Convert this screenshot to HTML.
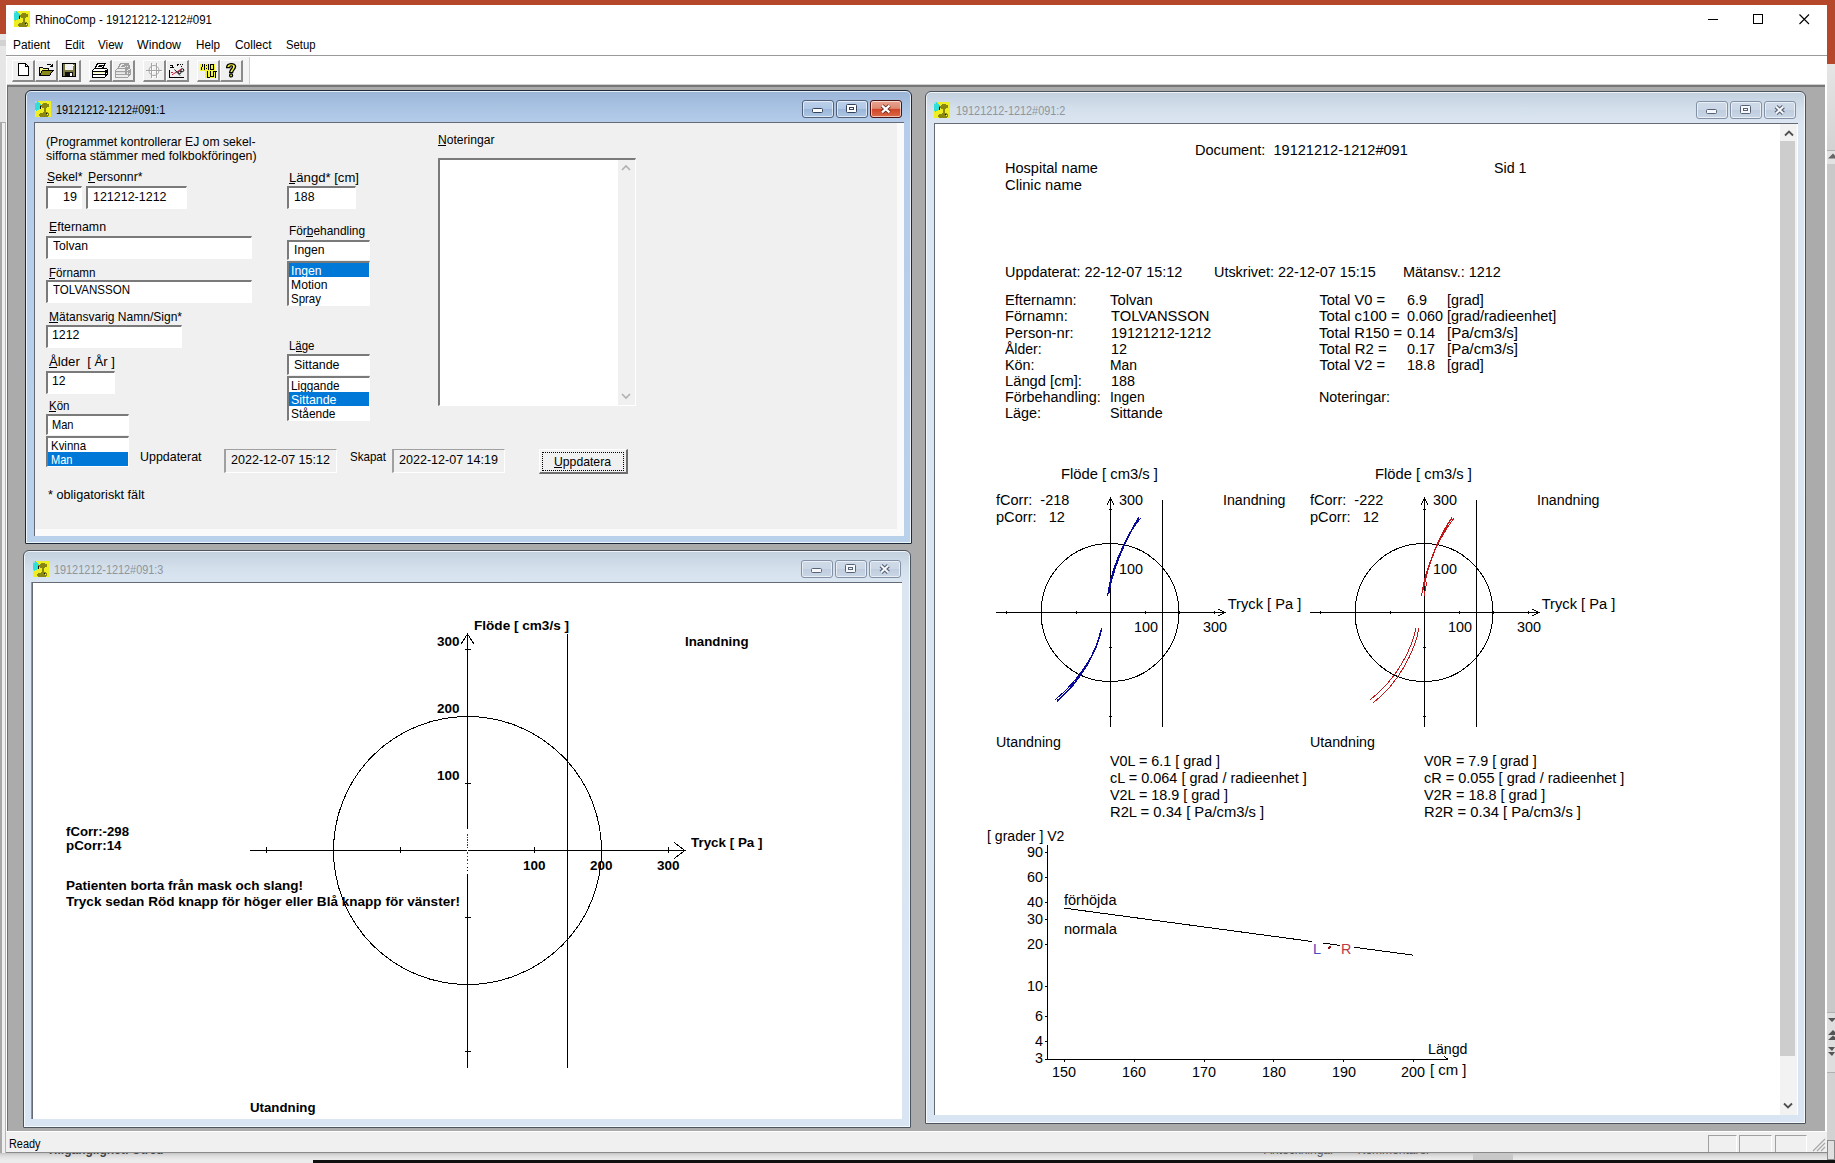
<!DOCTYPE html>
<html>
<head>
<meta charset="utf-8">
<title>RhinoComp</title>
<style>
*{box-sizing:border-box;margin:0;padding:0}
html,body{width:1835px;height:1163px;overflow:hidden}
body{position:relative;background:#e9e9e9;font-family:"Liberation Sans",sans-serif;font-size:12px;color:#000}
.abs{position:absolute}
.t{position:absolute;white-space:pre;line-height:1;transform-origin:0 0}
svg{position:absolute;overflow:visible}
/* background (other app behind) */
#bgtop{left:0;top:0;width:1835px;height:34px;background:#b5472b}
#bgleft{left:0;top:34px;width:6px;height:1129px;background:#e6e6e6}
#bgright{left:1827px;top:164px;width:8px;height:999px;background:#c9c9c9}
#bgbottom{left:0;top:1153px;width:1827px;height:10px;background:linear-gradient(#c4c4c4 0,#d8d8d8 2px,#e2e2e2 4px,#ececec 7px)}
#taskbar{left:313px;top:1160px;width:1522px;height:3px;background:#101010}
/* main window */
#main{left:6px;top:5px;width:1821px;height:1148px;background:#fff}
#mdi{left:7px;top:85px;width:1818px;height:1046px;background:#ababab;border-top:2px solid #777;border-left:1px solid #6e6e6e;box-shadow:0 -1px 0 #cfcfcf}
#status{left:6px;top:1131px;width:1821px;height:22px;background:#f0f0f0;border-top:1px solid #fff;border-bottom:1px solid #8a8a8a}
/* MDI children */
.win{position:absolute;border:1px solid #1d2a3a;border-radius:6px 6px 1px 1px;box-shadow:inset 0 0 0 1px rgba(255,255,255,.75)}
.win.active{background:linear-gradient(#9cb5d6 0,#a7c1e2 14px,#b5cdea 32px,#b9d1ea 100%)}
.win.inactive{background:linear-gradient(#c2cfdd 0,#d3dfeb 16px,#dbe6f2 32px,#d9e5f2 100%);border-color:#4b5560}
.win .client{position:absolute;border-left:1px solid #646b74;border-top:1px solid #646b74;overflow:hidden;background:#fff}
.win .cap{position:absolute;font-size:12px;white-space:pre;line-height:14px;transform-origin:0 0;transform:scaleX(.905)}
.inactive .cap{color:#90959c}
.cb{position:absolute;width:32px;height:18px;border:1px solid #53607a;border-radius:3px;box-shadow:inset 0 0 0 1px rgba(255,255,255,.6)}
.active .cb{background:linear-gradient(#bcd0ea 0,#b0c8e6 48%,#9ab6d9 52%,#adc6e4 100%)}
.active .cb.x{background:linear-gradient(#e8a491 0,#df8a72 46%,#cf4526 52%,#dc6a48 100%);border-color:#4a1414}
.inactive .cb{background:linear-gradient(#cfdae8 0,#cbd7e6 48%,#bfcddf 52%,#c9d6e5 100%);border-color:#8391a6}
.frm{font-size:12px}
</style>
</head>
<body>
<div class="abs" id="bgtop"></div>
<div class="abs" id="bgleft"></div>
<div class="abs" style="left:0;top:40px;width:6px;height:6px;background:#d2d2d2"></div>
<div class="abs" style="left:0;top:122px;width:6px;height:1041px;background:#efefef;border-left:2px solid #a8a8a8;border-right:1px solid #b4b4b4;border-top:1px solid #a8a8a8"></div>
<div class="abs" id="bgright"></div>
<div class="abs" style="left:1827px;top:0;width:8px;height:64px;background:#b5472b"></div>
<div class="abs" style="left:1827px;top:64px;width:8px;height:86px;background:linear-gradient(#e6e6e6,#d2d2d2)"></div>
<div class="abs" style="left:1827px;top:150px;width:8px;height:14px;background:#e2e2e2;border-top:1px solid #b0b0b0"></div>
<svg style="left:1828px;top:153px" width="7" height="6" viewBox="0 0 7 6"><path d="M0,5.5L5,0.5L7,2.5V5.5z" fill="#666"/></svg>
<div class="abs" style="left:1827px;top:1012px;width:8px;height:61px;background:#dedede;border-top:1px solid #b0b0b0;border-bottom:1px solid #b0b0b0"></div>
<svg style="left:1828px;top:1016px" width="7" height="46" viewBox="0 0 7 46"><path d="M0,2h7v1L4,6z M0,19L5,14L7,16v3z M0,24L5,19.5L7,21v3z M0,31h7L4,35z M0,36h7L4,40z" fill="#555"/></svg>
<div class="abs" style="left:1827px;top:1073px;width:8px;height:67px;background:#d2d2d2"></div>
<div class="abs" style="left:1827px;top:1140px;width:8px;height:20px;background:#e0e0e0;border:1px solid #8a8a8a"></div>
<div class="abs" id="bgbottom"></div>
<div class="abs" id="taskbar"></div>
<div class="abs" style="left:30px;top:1153px;width:160px;height:4px;overflow:hidden"><div class="t" style="left:0;top:-9px;font-size:12px;color:#444;font-weight:bold">^   Tillgänglighet: Utred</div></div>
<div class="abs" style="left:1264px;top:1153px;width:200px;height:4px;overflow:hidden"><div class="t" style="left:0;top:-9px;font-size:12px;color:#555">Anteckningar       Kommentarer</div></div>
<div class="abs" style="left:1473px;top:1153px;width:40px;height:7px;background:#c8c8c8"></div>

<div class="abs" id="main"></div>
<svg style="left:14px;top:11px" width="16" height="16" viewBox="0 0 16 16" shape-rendering="crispEdges">
<rect x="0" y="0" width="16" height="16" fill="#eeee22"/>
<polygon points="0,1 3,0 6,4 5,8 1,10 0,9" fill="#30e0d8"/>
<rect x="0" y="0" width="2" height="2" fill="#9fd8e8"/>
<path d="M7,2h5v1h2v3h-2v1h-1v4h2v1h1v3h-1v1h-8v-1h-1v-2h1v-1h3v-1h1v-4h-2v-1h-2v-2h2v-1h1z" fill="#8a8710"/>
<rect x="5" y="5" width="1" height="3" fill="#111"/>
<rect x="11" y="12" width="1" height="1" fill="#111"/>
<rect x="12" y="13" width="1" height="1" fill="#f4f4a0"/>
</svg>
<div class="t" style="left:35.00px;top:14px;font-size:12.5px;transform:scaleX(0.9194);">RhinoComp - 19121212-1212#091</div>
<svg style="left:1700px;top:8px" width="120" height="24" viewBox="0 0 120 24">
<path d="M8,11.5h10" stroke="#000" stroke-width="1" fill="none"/>
<rect x="53.5" y="6.5" width="9" height="9" stroke="#000" stroke-width="1" fill="none"/>
<path d="M99.5,6.5l9.5,9.5M109,6.5l-9.5,9.5" stroke="#000" stroke-width="1.1" fill="none"/>
</svg>

<div class="t" style="left:13.00px;top:39px;font-size:12.5px;transform:scaleX(0.9507);">Patient</div>
<div class="t" style="left:64.50px;top:39px;font-size:12.5px;transform:scaleX(0.8960);">Edit</div>
<div class="t" style="left:98.00px;top:39px;font-size:12.5px;transform:scaleX(0.9304);">View</div>
<div class="t" style="left:137.00px;top:39px;font-size:12.5px;transform:scaleX(0.9897);">Window</div>
<div class="t" style="left:195.50px;top:39px;font-size:12.5px;transform:scaleX(0.9335);">Help</div>
<div class="t" style="left:234.50px;top:39px;font-size:12.5px;transform:scaleX(0.9553);">Collect</div>
<div class="t" style="left:285.50px;top:39px;font-size:12.5px;transform:scaleX(0.9031);">Setup</div>
<div class="abs" style="left:6px;top:55px;width:1821px;height:1px;background:#9a9a9a"></div>

<div class="abs" style="left:7px;top:57px;width:243px;height:28px;background:#f5f5f5;border-right:1px solid #d0d0d0"></div>
<div class="abs" style="left:12px;top:60px;width:23px;height:22px;background:#f0f0f0;border-top:1px solid #fff;border-left:1px solid #fff;border-right:2px solid #8a8a8a;border-bottom:2px solid #8a8a8a"></div>
<div class="abs" style="left:35px;top:60px;width:23px;height:22px;background:#f0f0f0;border-top:1px solid #fff;border-left:1px solid #fff;border-right:2px solid #8a8a8a;border-bottom:2px solid #8a8a8a"></div>
<div class="abs" style="left:58px;top:60px;width:23px;height:22px;background:#f0f0f0;border-top:1px solid #fff;border-left:1px solid #fff;border-right:2px solid #8a8a8a;border-bottom:2px solid #8a8a8a"></div>
<div class="abs" style="left:89px;top:60px;width:23px;height:22px;background:#f0f0f0;border-top:1px solid #fff;border-left:1px solid #fff;border-right:2px solid #8a8a8a;border-bottom:2px solid #8a8a8a"></div>
<div class="abs" style="left:112px;top:60px;width:23px;height:22px;background:#f0f0f0;border-top:1px solid #fff;border-left:1px solid #fff;border-right:2px solid #8a8a8a;border-bottom:2px solid #8a8a8a"></div>
<div class="abs" style="left:143px;top:60px;width:23px;height:22px;background:#f0f0f0;border-top:1px solid #fff;border-left:1px solid #fff;border-right:2px solid #8a8a8a;border-bottom:2px solid #8a8a8a"></div>
<div class="abs" style="left:166px;top:60px;width:23px;height:22px;background:#f0f0f0;border-top:1px solid #fff;border-left:1px solid #fff;border-right:2px solid #8a8a8a;border-bottom:2px solid #8a8a8a"></div>
<div class="abs" style="left:197px;top:60px;width:23px;height:22px;background:#f0f0f0;border-top:1px solid #fff;border-left:1px solid #fff;border-right:2px solid #8a8a8a;border-bottom:2px solid #8a8a8a"></div>
<div class="abs" style="left:220px;top:60px;width:23px;height:22px;background:#f0f0f0;border-top:1px solid #fff;border-left:1px solid #fff;border-right:2px solid #8a8a8a;border-bottom:2px solid #8a8a8a"></div>
<svg style="left:15px;top:62px" width="16" height="16" viewBox="0 0 16 16" shape-rendering="crispEdges"><path d="M3.5,1.5h7l3,3v9h-10z" fill="#fff" stroke="#000"/><path d="M10.5,1.5v3h3" fill="none" stroke="#000"/></svg>
<svg style="left:38px;top:62px" width="16" height="16" viewBox="0 0 16 16" shape-rendering="crispEdges"><path d="M1.5,13.5v-8h3l1,1h5v2" fill="#f4f48a" stroke="#000"/><path d="M1.5,13.5l3,-5h10.5l-3.5,5z" fill="#8a8a1a" stroke="#000"/><path d="M8.5,3.5c1.5,-2 4,-2 5,0.5m0.5,-2v2.5h-2.5" fill="none" stroke="#000"/></svg>
<svg style="left:61px;top:62px" width="16" height="16" viewBox="0 0 16 16" shape-rendering="crispEdges"><rect x="1.5" y="1.5" width="13" height="13" fill="#7a7a42" stroke="#000"/><rect x="4" y="2" width="8" height="6" fill="#f0f0f0"/><rect x="4" y="10" width="8" height="4" fill="#111"/><rect x="9" y="11" width="2" height="3" fill="#fff"/><rect x="12" y="3" width="1" height="1" fill="#fff"/></svg>
<svg style="left:92px;top:62px" width="16" height="16" viewBox="0 0 16 16" shape-rendering="crispEdges"><path d="M0.5,8.5l2.5,-2.5h10l2.5,1.5v5l-2.5,2.5h-12.5z" fill="#fff" stroke="#000"/><path d="M5.5,1.5h7.5l-2.5,5h-7.5z" fill="#fff" stroke="#000"/><path d="M6.5,3.5h4M5.5,4.5h4" stroke="#000" fill="none"/><path d="M0.5,9.5h12.5l2.5,-2M1,12.5h12M13,9.5v5.5" stroke="#000" fill="none"/><rect x="1" y="10" width="12" height="1" fill="#f4f4b0"/><rect x="14" y="9" width="1" height="2" fill="#000"/><rect x="14" y="12" width="1" height="1" fill="#000"/></svg>
<svg style="left:115px;top:62px" width="16" height="16" viewBox="0 0 16 16" shape-rendering="crispEdges"><path d="M0.5,8.5l2.5,-2.5h10l2.5,1.5v5l-2.5,2.5h-12.5z" fill="#ececec" stroke="#a0a0a0"/><path d="M5.5,1.5h7.5l-2.5,5h-7.5z" fill="#ececec" stroke="#a0a0a0"/><path d="M6.5,3.5h4M5.5,4.5h4" stroke="#a0a0a0" fill="none"/><path d="M0.5,9.5h12.5l2.5,-2M1,12.5h12M13,9.5v5.5" stroke="#a0a0a0" fill="none"/><rect x="1" y="10" width="12" height="1" fill="#dcdcdc"/><rect x="14" y="9" width="1" height="2" fill="#a0a0a0"/><rect x="14" y="12" width="1" height="1" fill="#a0a0a0"/><path d="M9,2.5h3l2,1v2l-3,2v1" stroke="#a0a0a0" stroke-width="2" fill="none"/><rect x="10" y="10" width="2" height="2" fill="#a0a0a0"/></svg>
<svg style="left:146px;top:62px" width="17" height="18" viewBox="0 0 17 18" shape-rendering="crispEdges"><g shape-rendering="auto" transform="translate(1,1)"><circle cx="8" cy="8.5" r="5" fill="none" stroke="#fff"/><path d="M0,8.5h16M5.5,1v15M10.5,1v15" stroke="#fff" fill="none"/></g><g shape-rendering="auto"><circle cx="8" cy="8.5" r="5" fill="none" stroke="#a4a4a4"/><path d="M0,8.5h16M5.5,1v15M10.5,1v15" stroke="#a4a4a4" fill="none"/></g></svg>
<svg style="left:169px;top:62px" width="16" height="16" viewBox="0 0 16 16" shape-rendering="crispEdges"><path d="M0.5,8v7.5h14" stroke="#000" fill="none"/><path d="M1,3.5h3M3,4.5h1M1,5.5h4M8,2.5h2M8,3.5h1M11,2.5h1M13,2.5h1M12,4.5h1" stroke="#000"/><g shape-rendering="auto"><circle cx="13.3" cy="8.2" r="1.5" fill="none" stroke="#000"/><circle cx="10.7" cy="10.3" r="1.3" fill="none" stroke="#000"/><path d="M3.5,12.5l9,-5.5" stroke="#c8203c" stroke-width="1"/><path d="M5.5,7.5l5.5,6" stroke="#000" stroke-width=".9"/><path d="M2,10.5h2M3,12.5h1" stroke="#c8203c"/></g></svg>
<svg style="left:200px;top:62px" width="16" height="16" viewBox="0 0 16 16" shape-rendering="crispEdges"><path d="M0,2h15v6.5h1v7h-11.5v-7h-4.5z" fill="#f2f236"/><path d="M1,7.5l2,-5M4.5,2v6M6.5,3v1M6.5,6v1M8.5,2v6M10.5,2.5h3v5h-3zM7.5,9v6M6.5,15.5h3M10.5,9v5.5h2.5v-5.5M13.5,9.5h3M15,9.5v6" stroke="#000" fill="none"/></svg>
<svg style="left:223px;top:62px" width="16" height="16" viewBox="0 0 16 16" shape-rendering="crispEdges"><g shape-rendering="auto"><path d="M3.6,5.6C3.6,0.4 12.6,0.4 12.6,4.6C12.6,7.6 9.6,8 9.6,10.6h-3C6.6,7.2 9.4,6.6 9.4,4.9C9.4,3.4 6.8,3.4 6.8,5.6z" fill="#f2f236" stroke="#000" stroke-width="1.3"/><circle cx="8.1" cy="13.4" r="1.5" fill="#f2f236" stroke="#000" stroke-width="1.3"/></g></svg>

<div class="abs" id="mdi"></div>
<div class="abs" id="status"></div>
<div class="t" style="left:8.50px;top:1138px;font-size:12.5px;transform:scaleX(0.8718);">Ready</div>
<div class="abs" style="left:1708px;top:1135px;width:29px;height:17px;border-left:1px solid #a0a0a0;border-top:1px solid #a0a0a0;border-right:1px solid #fff"></div>
<div class="abs" style="left:1739px;top:1135px;width:33px;height:17px;border-left:1px solid #a0a0a0;border-top:1px solid #a0a0a0;border-right:1px solid #fff"></div>
<div class="abs" style="left:1775px;top:1135px;width:32px;height:17px;border-left:1px solid #a0a0a0;border-top:1px solid #a0a0a0;border-right:1px solid #fff"></div>
<svg style="left:1811px;top:1137px" width="15" height="15" viewBox="0 0 15 15"><path d="M2,14l12,-12M6,14l8,-8M10,14l4,-4" stroke="#a8a8a8" stroke-width="1.2"/></svg>


<!-- WIN1 -->
<div class="win active" id="w1" style="left:25px;top:90px;width:887px;height:454px">
  <div class="cap" style="left:30px;top:12px">19121212-1212#091:1</div>
<div class="cb " style="left:776px;top:9px"><svg style="left:9px;top:7px" width="12" height="6" viewBox="0 0 12 6"><rect x=".5" y=".5" width="10" height="4" rx="1" fill="#fff" stroke="#33415a"/></svg></div>
<div class="cb " style="left:810px;top:9px"><svg style="left:9px;top:3px" width="12" height="10" viewBox="0 0 12 10"><rect x=".5" y=".5" width="10" height="8" rx="1" fill="#fff" stroke="#33415a"/><rect x="3.5" y="3.5" width="4" height="2" fill="#fff" stroke="#33415a"/></svg></div>
<div class="cb x" style="left:844px;top:9px"><svg style="left:9px;top:3px" width="12" height="10" viewBox="0 0 12 10"><path d="M2,1.6l7.4,6.8M9.4,1.6l-7.4,6.8" stroke="#5a1c14" stroke-width="4" fill="none"/><path d="M2,1.6l7.4,6.8M9.4,1.6l-7.4,6.8" stroke="#fff" stroke-width="2.3" fill="none"/></svg></div>
<svg style="left:9px;top:10px" width="16" height="16" viewBox="0 0 16 16" shape-rendering="crispEdges">
<rect x="0" y="0" width="16" height="16" fill="#eeee22"/>
<polygon points="0,1 3,0 6,4 5,8 1,10 0,9" fill="#30e0d8"/>
<rect x="0" y="0" width="2" height="2" fill="#9fd8e8"/>
<path d="M7,2h5v1h2v3h-2v1h-1v4h2v1h1v3h-1v1h-8v-1h-1v-2h1v-1h3v-1h1v-4h-2v-1h-2v-2h2v-1h1z" fill="#8a8710"/>
<rect x="5" y="5" width="1" height="3" fill="#111"/>
<rect x="11" y="12" width="1" height="1" fill="#111"/>
<rect x="12" y="13" width="1" height="1" fill="#f4f4a0"/>
</svg>
  <div class="client frm" id="c1" style="left:8px;top:31px;width:870px;height:414px;background:#fafafa">
    <div class="abs" id="f1" style="left:0;top:0;width:862px;height:406px;background:#f0f0f0">
<div class="t" style="left:11.30px;top:12px;font-size:13px;transform:scaleX(0.9385);">(Programmet kontrollerar EJ om sekel-</div>
<div class="t" style="left:11.30px;top:26px;font-size:13px;transform:scaleX(0.9500);">sifforna stämmer med folkbokföringen)</div>
<div class="t" style="left:12.00px;top:47px;font-size:13px;transform:scaleX(0.9447);">Sekel*</div>
<div class="abs" style="left:12px;top:59px;width:7px;height:1px;background:#000"></div>
<div class="t" style="left:53.20px;top:47px;font-size:13px;transform:scaleX(0.9427);">Personnr*</div>
<div class="abs" style="left:53.2px;top:59px;width:7px;height:1px;background:#000"></div>
<div class="abs" style="left:11px;top:63px;width:36px;height:23px;background:#fff;border-top:2px solid #7a7a7a;border-left:2px solid #7a7a7a;border-right:1px solid #fff;border-bottom:1px solid #fff"></div>
<div class="t" style="left:28.00px;top:67px;font-size:13px;transform:scaleX(0.9682);">19</div>
<div class="abs" style="left:51px;top:63px;width:101px;height:23px;background:#fff;border-top:2px solid #7a7a7a;border-left:2px solid #7a7a7a;border-right:1px solid #fff;border-bottom:1px solid #fff"></div>
<div class="t" style="left:57.70px;top:67px;font-size:13px;transform:scaleX(0.9591);">121212-1212</div>
<div class="t" style="left:254.00px;top:48px;font-size:13px;transform:scaleX(1.0090);">Längd* [cm]</div>
<div class="abs" style="left:254px;top:60.30000000000001px;width:6px;height:1px;background:#000"></div>
<div class="abs" style="left:252px;top:63px;width:69px;height:23px;background:#fff;border-top:2px solid #7a7a7a;border-left:2px solid #7a7a7a;border-right:1px solid #fff;border-bottom:1px solid #fff"></div>
<div class="t" style="left:258.80px;top:67px;font-size:13px;transform:scaleX(0.9451);">188</div>
<div class="t" style="left:13.80px;top:97px;font-size:13px;transform:scaleX(0.9504);">Efternamn</div>
<div class="abs" style="left:13.799999999999997px;top:109px;width:7px;height:1px;background:#000"></div>
<div class="abs" style="left:11px;top:113px;width:206px;height:23px;background:#fff;border-top:2px solid #7a7a7a;border-left:2px solid #7a7a7a;border-right:1px solid #fff;border-bottom:1px solid #fff"></div>
<div class="t" style="left:18.00px;top:116px;font-size:13px;transform:scaleX(0.9314);">Tolvan</div>
<div class="t" style="left:13.80px;top:143px;font-size:13px;transform:scaleX(0.8939);">Förnamn</div>
<div class="abs" style="left:13.799999999999997px;top:154.8px;width:6px;height:1px;background:#000"></div>
<div class="abs" style="left:11px;top:157px;width:206px;height:23px;background:#fff;border-top:2px solid #7a7a7a;border-left:2px solid #7a7a7a;border-right:1px solid #fff;border-bottom:1px solid #fff"></div>
<div class="t" style="left:18.00px;top:160px;font-size:13px;transform:scaleX(0.8882);">TOLVANSSON</div>
<div class="t" style="left:13.80px;top:187px;font-size:13px;transform:scaleX(0.9250);">Mätansvarig Namn/Sign*</div>
<div class="abs" style="left:13.799999999999997px;top:199px;width:9px;height:1px;background:#000"></div>
<div class="abs" style="left:11px;top:202px;width:136px;height:23px;background:#fff;border-top:2px solid #7a7a7a;border-left:2px solid #7a7a7a;border-right:1px solid #fff;border-bottom:1px solid #fff"></div>
<div class="t" style="left:16.80px;top:205px;font-size:13px;transform:scaleX(0.9509);">1212</div>
<div class="t" style="left:13.80px;top:232px;font-size:13px;transform:scaleX(1.0151);">Ålder  [ År ]</div>
<div class="abs" style="left:13.799999999999997px;top:244.3px;width:8px;height:1px;background:#000"></div>
<div class="abs" style="left:11px;top:248px;width:69px;height:23px;background:#fff;border-top:2px solid #7a7a7a;border-left:2px solid #7a7a7a;border-right:1px solid #fff;border-bottom:1px solid #fff"></div>
<div class="t" style="left:16.80px;top:251px;font-size:13px;transform:scaleX(0.9336);">12</div>
<div class="t" style="left:13.80px;top:276px;font-size:13px;transform:scaleX(0.8862);">Kön</div>
<div class="abs" style="left:13.799999999999997px;top:288.3px;width:7px;height:1px;background:#000"></div>
<div class="abs" style="left:11px;top:291px;width:83px;height:21px;background:#fff;border-top:2px solid #7a7a7a;border-left:2px solid #7a7a7a;border-right:1px solid #fff;border-bottom:1px solid #fff"></div>
<div class="t" style="left:17.00px;top:295px;font-size:13px;transform:scaleX(0.8501);">Man</div>
<div class="abs" style="left:11px;top:313px;width:83px;height:31px;background:#fff;border-top:2px solid #7a7a7a;border-left:2px solid #7a7a7a;border-right:1px solid #fff;border-bottom:1px solid #fff"></div>
<div class="t" style="left:15.50px;top:316px;font-size:13px;transform:scaleX(0.8805);">Kvinna</div>
<div class="abs" style="left:13px;top:329px;width:80px;height:14px;background:#0078d7"></div>
<div class="t" style="left:15.50px;top:330px;font-size:13px;transform:scaleX(0.8501);color:#fff;">Man</div>
<div class="t" style="left:254.00px;top:101px;font-size:13px;transform:scaleX(0.9143);">Förbehandling</div>
<div class="abs" style="left:271px;top:113px;width:7px;height:1px;background:#000"></div>
<div class="abs" style="left:252px;top:117px;width:83px;height:20px;background:#fff;border-top:2px solid #7a7a7a;border-left:2px solid #7a7a7a;border-right:1px solid #fff;border-bottom:1px solid #fff"></div>
<div class="t" style="left:258.80px;top:120px;font-size:13px;transform:scaleX(0.9375);">Ingen</div>
<div class="abs" style="left:252px;top:138px;width:83px;height:45px;background:#fff;border-top:2px solid #7a7a7a;border-left:2px solid #7a7a7a;border-right:1px solid #fff;border-bottom:1px solid #fff"></div>
<div class="abs" style="left:254px;top:140px;width:80px;height:14px;background:#0078d7"></div>
<div class="t" style="left:255.70px;top:141px;font-size:13px;transform:scaleX(0.9375);color:#fff;">Ingen</div>
<div class="t" style="left:255.70px;top:155px;font-size:13px;transform:scaleX(0.9354);">Motion</div>
<div class="t" style="left:255.70px;top:169px;font-size:13px;transform:scaleX(0.8834);">Spray</div>
<div class="t" style="left:254.00px;top:216px;font-size:13px;transform:scaleX(0.8817);">Läge</div>
<div class="abs" style="left:260.5px;top:227.60000000000002px;width:6.5px;height:1px;background:#000"></div>
<div class="abs" style="left:252px;top:231px;width:83px;height:21px;background:#fff;border-top:2px solid #7a7a7a;border-left:2px solid #7a7a7a;border-right:1px solid #fff;border-bottom:1px solid #fff"></div>
<div class="t" style="left:258.80px;top:235px;font-size:13px;transform:scaleX(0.9538);">Sittande</div>
<div class="abs" style="left:252px;top:253px;width:83px;height:45px;background:#fff;border-top:2px solid #7a7a7a;border-left:2px solid #7a7a7a;border-right:1px solid #fff;border-bottom:1px solid #fff"></div>
<div class="t" style="left:255.70px;top:256px;font-size:13px;transform:scaleX(0.9065);">Liggande</div>
<div class="abs" style="left:254px;top:269px;width:80px;height:14px;background:#0078d7"></div>
<div class="t" style="left:255.70px;top:270px;font-size:13px;transform:scaleX(0.9538);color:#fff;">Sittande</div>
<div class="t" style="left:255.70px;top:284px;font-size:13px;transform:scaleX(0.9188);">Stående</div>
<div class="t" style="left:105.30px;top:327px;font-size:13px;transform:scaleX(0.9561);">Uppdaterat</div>
<div class="abs" style="left:189px;top:326px;width:113px;height:24px;background:#f0f0f0;border-top:1px solid #a0a0a0;border-left:2px solid #a0a0a0;border-right:1px solid #fff;border-bottom:1px solid #fff"></div>
<div class="t" style="left:195.60px;top:330px;font-size:13px;transform:scaleX(0.9645);">2022-12-07 15:12</div>
<div class="t" style="left:315.40px;top:327px;font-size:13px;transform:scaleX(0.8895);">Skapat</div>
<div class="abs" style="left:357px;top:326px;width:113px;height:24px;background:#f0f0f0;border-top:1px solid #a0a0a0;border-left:2px solid #a0a0a0;border-right:1px solid #fff;border-bottom:1px solid #fff"></div>
<div class="t" style="left:363.50px;top:330px;font-size:13px;transform:scaleX(0.9645);">2022-12-07 14:19</div>
<div class="t" style="left:12.60px;top:365px;font-size:13px;transform:scaleX(0.9748);">* obligatoriskt fält</div>
<div class="t" style="left:403.30px;top:10px;font-size:13px;transform:scaleX(0.9308);">Noteringar</div>
<div class="abs" style="left:403.3px;top:22.099999999999994px;width:8px;height:1px;background:#000"></div>
<div class="abs" style="left:403px;top:35px;width:198px;height:248px;background:#fff;border-top:2px solid #7a7a7a;border-left:2px solid #7a7a7a;border-right:1px solid #fff;border-bottom:1px solid #fff"></div>
<div class="abs" style="left:583px;top:37px;width:17px;height:245px;background:#f0f0f0"></div>
<svg style="left:586px;top:42px" width="10" height="6" viewBox="0 0 10 6"><path d="M1,5l4,-4l4,4" stroke="#b0b0b0" stroke-width="1.6" fill="none"/></svg><svg style="left:586px;top:270px" width="10" height="6" viewBox="0 0 10 6"><path d="M1,1l4,4l4,-4" stroke="#b0b0b0" stroke-width="1.6" fill="none"/></svg><div class="abs" style="left:504px;top:326px;width:89px;height:25px;background:#f0f0f0;border-top:1px solid #fff;border-left:1px solid #fff;border-right:2px solid #6e6e6e;border-bottom:2px solid #6e6e6e"></div>
<div class="abs" style="left:507px;top:329px;width:82px;height:19px;border:1px dotted #000"></div>
<div class="t" style="left:519.00px;top:332px;font-size:13px;transform:scaleX(0.9389);">Uppdatera</div>
<div class="abs" style="left:519px;top:344.2px;width:8px;height:1px;background:#000"></div>

    </div>
  </div>
</div>
<!-- WIN3 -->
<div class="win inactive" id="w3" style="left:23px;top:550px;width:888px;height:578px">
  <div class="cap" style="left:30px;top:12px">19121212-1212#091:3</div>
<div class="cb " style="left:777px;top:9px"><svg style="left:9px;top:7px" width="12" height="6" viewBox="0 0 12 6"><rect x=".5" y=".5" width="10" height="4" rx="1" fill="#f6f8fb" stroke="#566275"/></svg></div>
<div class="cb " style="left:811px;top:9px"><svg style="left:9px;top:3px" width="12" height="10" viewBox="0 0 12 10"><rect x=".5" y=".5" width="10" height="8" rx="1" fill="#f6f8fb" stroke="#566275"/><rect x="3.5" y="3.5" width="4" height="2" fill="#f6f8fb" stroke="#566275"/></svg></div>
<div class="cb x" style="left:845px;top:9px"><svg style="left:9px;top:3px" width="12" height="10" viewBox="0 0 12 10"><path d="M2,1.6l7.4,6.8M9.4,1.6l-7.4,6.8" stroke="#566275" stroke-width="4.2" fill="none"/><path d="M2,1.6l7.4,6.8M9.4,1.6l-7.4,6.8" stroke="#f6f8fb" stroke-width="2" fill="none"/></svg></div>
<svg style="left:9px;top:10px" width="16" height="16" viewBox="0 0 16 16" shape-rendering="crispEdges">
<rect x="0" y="0" width="16" height="16" fill="#eeee22"/>
<polygon points="0,1 3,0 6,4 5,8 1,10 0,9" fill="#30e0d8"/>
<rect x="0" y="0" width="2" height="2" fill="#9fd8e8"/>
<path d="M7,2h5v1h2v3h-2v1h-1v4h2v1h1v3h-1v1h-8v-1h-1v-2h1v-1h3v-1h1v-4h-2v-1h-2v-2h2v-1h1z" fill="#8a8710"/>
<rect x="5" y="5" width="1" height="3" fill="#111"/>
<rect x="11" y="12" width="1" height="1" fill="#111"/>
<rect x="12" y="13" width="1" height="1" fill="#f4f4a0"/>
</svg>
  <div class="client" id="c3" style="left:8px;top:31px;width:870px;height:537px;box-shadow:-1px 0 0 #8d959e">
<svg style="left:0;top:0" width="869" height="536" viewBox="33 583 869 536" shape-rendering="crispEdges"><g stroke="#000" stroke-width="1" fill="none"><path d="M467.5,634V1068"/><path d="M567.5,634V1068"/><path d="M250,850.5H684"/><g><path d="M461,644L467.5,634L474,644"/><path d="M674,842.5L685,850.5L674,858.5"/></g><path d="M465,649.5H471"/><path d="M465,783.5H471"/><path d="M465,917.5H471"/><path d="M465,984.5H471"/><path d="M465,1051.5H471"/><path d="M266.5,847V853"/><path d="M400.5,847V853"/><path d="M534.5,847V853"/><path d="M601.5,847V853"/><path d="M668.5,847V853"/><circle cx="467.5" cy="850.5" r="134"/></g><path d="M467.5,829V874" stroke="#fff" stroke-width="1" fill="none"/><path d="M467.5,834V849" stroke="#7a1830" stroke-width="1" stroke-dasharray="2,1,1,1" fill="none"/><path d="M467.5,852V864" stroke="#7a1830" stroke-width="1" stroke-dasharray="2,2,1,2" fill="none"/><path d="M467.5,867V868M467.5,870V871" stroke="#000" stroke-width="1" fill="none"/></svg>
<div class="t" style="left:441.00px;top:36px;font-size:13.5px;transform:scaleX(1.0051);font-weight:bold;">Flöde [ cm3/s ]</div>
<div class="t" style="left:404.00px;top:52px;font-size:13.5px;font-weight:bold;">300</div>
<div class="t" style="left:404.00px;top:119px;font-size:13.5px;font-weight:bold;">200</div>
<div class="t" style="left:404.00px;top:186px;font-size:13.5px;font-weight:bold;">100</div>
<div class="t" style="left:651.70px;top:52px;font-size:13.5px;transform:scaleX(0.9847);font-weight:bold;">Inandning</div>
<div class="t" style="left:490.00px;top:276px;font-size:13.5px;font-weight:bold;">100</div>
<div class="t" style="left:557.00px;top:276px;font-size:13.5px;font-weight:bold;">200</div>
<div class="t" style="left:624.00px;top:276px;font-size:13.5px;font-weight:bold;">300</div>
<div class="t" style="left:658.40px;top:253px;font-size:13.5px;transform:scaleX(0.9925);font-weight:bold;">Tryck [ Pa ]</div>
<div class="t" style="left:33.00px;top:242px;font-size:13.5px;transform:scaleX(0.9765);font-weight:bold;">fCorr:-298</div>
<div class="t" style="left:33.00px;top:256px;font-size:13.5px;transform:scaleX(0.9865);font-weight:bold;">pCorr:14</div>
<div class="t" style="left:33.00px;top:296px;font-size:13.5px;font-weight:bold;">Patienten borta från mask och slang!</div>
<div class="t" style="left:33.00px;top:312px;font-size:13.5px;transform:scaleX(1.0042);font-weight:bold;">Tryck sedan Röd knapp för höger eller Blå knapp för vänster!</div>
<div class="t" style="left:217.30px;top:518px;font-size:13.5px;transform:scaleX(0.9815);font-weight:bold;">Utandning</div>

  </div>
</div>
<!-- WIN2 -->
<div class="win inactive" id="w2" style="left:925px;top:91px;width:881px;height:1033px">
  <div class="cap" style="left:30px;top:12px">19121212-1212#091:2</div>
<div class="cb " style="left:770px;top:9px"><svg style="left:9px;top:7px" width="12" height="6" viewBox="0 0 12 6"><rect x=".5" y=".5" width="10" height="4" rx="1" fill="#f6f8fb" stroke="#566275"/></svg></div>
<div class="cb " style="left:804px;top:9px"><svg style="left:9px;top:3px" width="12" height="10" viewBox="0 0 12 10"><rect x=".5" y=".5" width="10" height="8" rx="1" fill="#f6f8fb" stroke="#566275"/><rect x="3.5" y="3.5" width="4" height="2" fill="#f6f8fb" stroke="#566275"/></svg></div>
<div class="cb x" style="left:838px;top:9px"><svg style="left:9px;top:3px" width="12" height="10" viewBox="0 0 12 10"><path d="M2,1.6l7.4,6.8M9.4,1.6l-7.4,6.8" stroke="#566275" stroke-width="4.2" fill="none"/><path d="M2,1.6l7.4,6.8M9.4,1.6l-7.4,6.8" stroke="#f6f8fb" stroke-width="2" fill="none"/></svg></div>
<svg style="left:8px;top:10px" width="16" height="16" viewBox="0 0 16 16" shape-rendering="crispEdges">
<rect x="0" y="0" width="16" height="16" fill="#eeee22"/>
<polygon points="0,1 3,0 6,4 5,8 1,10 0,9" fill="#30e0d8"/>
<rect x="0" y="0" width="2" height="2" fill="#9fd8e8"/>
<path d="M7,2h5v1h2v3h-2v1h-1v4h2v1h1v3h-1v1h-8v-1h-1v-2h1v-1h3v-1h1v-4h-2v-1h-2v-2h2v-1h1z" fill="#8a8710"/>
<rect x="5" y="5" width="1" height="3" fill="#111"/>
<rect x="11" y="12" width="1" height="1" fill="#111"/>
<rect x="12" y="13" width="1" height="1" fill="#f4f4a0"/>
</svg>
  <div class="client" id="c2" style="left:8px;top:31px;width:864px;height:992px">
<svg style="left:0;top:0" width="845" height="991" viewBox="935 124 845 991" shape-rendering="crispEdges"><g stroke="#000" stroke-width="1" fill="none" transform="translate(0,0)"><path d="M1110.5,499V727"/><path d="M1162.5,500V727"/><path d="M996,612.5H1224"/><g><path d="M1107,505L1110.5,498.5L1114,505"/><path d="M1218,609L1224.5,612.5L1218,616"/></g><path d="M1006.5,611V614"/><path d="M1076.5,611V614"/><path d="M1145.5,611V614"/><path d="M1179.5,611V614"/><path d="M1214.5,611V614"/><path d="M1109,509.5H1112"/><path d="M1109,647.5H1112"/><path d="M1109,681.5H1112"/><path d="M1109,716.5H1112"/><circle cx="1110" cy="612.5" r="69"/></g><g stroke="#000" stroke-width="1" fill="none" transform="translate(314,0)"><path d="M1110.5,499V727"/><path d="M1162.5,500V727"/><path d="M996,612.5H1224"/><g><path d="M1107,505L1110.5,498.5L1114,505"/><path d="M1218,609L1224.5,612.5L1218,616"/></g><path d="M1006.5,611V614"/><path d="M1076.5,611V614"/><path d="M1145.5,611V614"/><path d="M1179.5,611V614"/><path d="M1214.5,611V614"/><path d="M1109,509.5H1112"/><path d="M1109,647.5H1112"/><path d="M1109,681.5H1112"/><path d="M1109,716.5H1112"/><circle cx="1110" cy="612.5" r="69"/></g><g fill="none" stroke-width="1"><g stroke="#0a0a9a"><path d="M1107.5,596C1110,575 1120,545 1140.5,518"/><path d="M1108.5,594C1112,572 1123,543 1139,517.5" stroke-width="1.6"/><path d="M1102,628C1099,645 1085,675 1055,700"/><path d="M1101.5,629C1097,650 1082,680 1057,701" stroke-width="1.6"/></g><g stroke="#c01818"><path d="M1421.5,596C1424,575 1434,545 1454,518"/><path d="M1423,590C1428,565 1437,540 1452,517.5" stroke-width="1.4"/><path d="M1424,596C1425,590 1426,586 1427,582"/><path d="M1416,628C1412,648 1398,678 1370,700"/><path d="M1419,628C1415,650 1400,682 1373,703"/></g></g><g stroke="#000" stroke-width="1" fill="none"><path d="M1047.5,845V1059.5H1448"/><g><path d="M1444,1056.5L1448.5,1059.5"/></g><path d="M1045,852.5H1048"/><path d="M1045,877.5H1048"/><path d="M1045,902.5H1048"/><path d="M1045,919.5H1048"/><path d="M1045,944.5H1048"/><path d="M1045,986.5H1048"/><path d="M1045,1016.5H1048"/><path d="M1045,1041.5H1048"/><path d="M1045,1059.5H1048"/><path d="M1064.5,1059V1062"/><path d="M1134.2,1059V1062"/><path d="M1204.0,1059V1062"/><path d="M1273.8,1059V1062"/><path d="M1343.5,1059V1062"/><path d="M1413.2,1059V1062"/><g><path d="M1064,908.1L1312,941.5"/><path d="M1323,943.1L1340,945.4"/><path d="M1354,947.2L1413.5,955.2"/></g></g><rect x="1328" y="947" width="2" height="2" fill="#8a1c1c"/><rect x="1329" y="946" width="2" height="2" fill="#8a1c1c"/></svg>
<div class="abs" style="left:845px;top:0px;width:17px;height:991px;background:#f2f2f2"></div>
<div class="abs" style="left:845px;top:17px;width:15px;height:915px;background:#cdcdcd"></div>
<svg style="left:849px;top:6px" width="10" height="7" viewBox="0 0 10 7"><path d="M1,5.5l4,-4l4,4" stroke="#505050" stroke-width="1.8" fill="none"/></svg><svg style="left:848px;top:978px" width="10" height="7" viewBox="0 0 10 7"><path d="M1,1.5l4,4l4,-4" stroke="#505050" stroke-width="1.8" fill="none"/></svg><div class="t" style="left:260.00px;top:19px;font-size:14.67px;transform:scaleX(0.9929);">Document:  19121212-1212#091</div>
<div class="t" style="left:70.00px;top:37px;font-size:14.67px;transform:scaleX(0.9917);">Hospital name</div>
<div class="t" style="left:559.20px;top:37px;font-size:14.67px;transform:scaleX(0.9719);">Sid 1</div>
<div class="t" style="left:70.00px;top:54px;font-size:14.67px;transform:scaleX(1.0047);">Clinic name</div>
<div class="t" style="left:70.00px;top:141px;font-size:14.67px;transform:scaleX(0.9847);">Uppdaterat: 22-12-07 15:12</div>
<div class="t" style="left:279.00px;top:141px;font-size:14.67px;transform:scaleX(0.9835);">Utskrivet: 22-12-07 15:15</div>
<div class="t" style="left:468.00px;top:141px;font-size:14.67px;transform:scaleX(0.9877);">Mätansv.: 1212</div>
<div class="t" style="left:70.00px;top:169px;font-size:14.67px;">Efternamn:</div>
<div class="t" style="left:175.40px;top:169px;font-size:14.67px;transform:scaleX(1.0100);">Tolvan</div>
<div class="t" style="left:70.00px;top:185px;font-size:14.67px;">Förnamn:</div>
<div class="t" style="left:175.90px;top:185px;font-size:14.67px;transform:scaleX(1.0060);">TOLVANSSON</div>
<div class="t" style="left:70.00px;top:202px;font-size:14.67px;transform:scaleX(1.0040);">Person-nr:</div>
<div class="t" style="left:176.20px;top:202px;font-size:14.67px;transform:scaleX(0.9750);">19121212-1212</div>
<div class="t" style="left:70.00px;top:218px;font-size:14.67px;transform:scaleX(0.9570);">Ålder:</div>
<div class="t" style="left:176.20px;top:218px;font-size:14.67px;transform:scaleX(0.9800);">12</div>
<div class="t" style="left:70.00px;top:234px;font-size:14.67px;transform:scaleX(0.9800);">Kön:</div>
<div class="t" style="left:175.40px;top:234px;font-size:14.67px;transform:scaleX(0.9450);">Man</div>
<div class="t" style="left:70.00px;top:250px;font-size:14.67px;transform:scaleX(1.0050);">Längd [cm]:</div>
<div class="t" style="left:176.20px;top:250px;font-size:14.67px;transform:scaleX(0.9800);">188</div>
<div class="t" style="left:70.00px;top:266px;font-size:14.67px;transform:scaleX(0.9800);">Förbehandling:</div>
<div class="t" style="left:175.40px;top:266px;font-size:14.67px;transform:scaleX(0.9450);">Ingen</div>
<div class="t" style="left:70.00px;top:282px;font-size:14.67px;transform:scaleX(0.9800);">Läge:</div>
<div class="t" style="left:175.40px;top:282px;font-size:14.67px;transform:scaleX(0.9800);">Sittande</div>
<div class="t" style="left:384.40px;top:169px;font-size:14.67px;">Total V0 =</div>
<div class="t" style="left:472.00px;top:169px;font-size:14.67px;transform:scaleX(0.9800);">6.9</div>
<div class="t" style="left:512.00px;top:169px;font-size:14.67px;transform:scaleX(0.9800);">[grad]</div>
<div class="t" style="left:384.40px;top:185px;font-size:14.67px;transform:scaleX(1.0160);">Total c100 =</div>
<div class="t" style="left:472.00px;top:185px;font-size:14.67px;transform:scaleX(0.9800);">0.060</div>
<div class="t" style="left:512.00px;top:185px;font-size:14.67px;transform:scaleX(0.9860);">[grad/radieenhet]</div>
<div class="t" style="left:384.40px;top:202px;font-size:14.67px;transform:scaleX(1.0060);">Total R150 =</div>
<div class="t" style="left:472.00px;top:202px;font-size:14.67px;transform:scaleX(0.9800);">0.14</div>
<div class="t" style="left:512.00px;top:202px;font-size:14.67px;transform:scaleX(1.0260);">[Pa/cm3/s]</div>
<div class="t" style="left:384.40px;top:218px;font-size:14.67px;transform:scaleX(1.0190);">Total R2 =</div>
<div class="t" style="left:472.00px;top:218px;font-size:14.67px;transform:scaleX(0.9800);">0.17</div>
<div class="t" style="left:512.00px;top:218px;font-size:14.67px;transform:scaleX(1.0260);">[Pa/cm3/s]</div>
<div class="t" style="left:384.40px;top:234px;font-size:14.67px;">Total V2 =</div>
<div class="t" style="left:472.00px;top:234px;font-size:14.67px;transform:scaleX(0.9800);">18.8</div>
<div class="t" style="left:512.00px;top:234px;font-size:14.67px;transform:scaleX(0.9800);">[grad]</div>
<div class="t" style="left:384.40px;top:266px;font-size:14.67px;transform:scaleX(0.9800);">Noteringar:</div>
<div class="t" style="left:126.30px;top:343px;font-size:14.67px;transform:scaleX(1.0083);">Flöde [ cm3/s ]</div>
<div class="t" style="left:61.00px;top:369px;font-size:14.67px;transform:scaleX(0.9907);">fCorr:  -218</div>
<div class="t" style="left:61.00px;top:386px;font-size:14.67px;transform:scaleX(0.9956);">pCorr:   12</div>
<div class="t" style="left:183.70px;top:369px;font-size:14.67px;transform:scaleX(0.9800);">300</div>
<div class="t" style="left:287.60px;top:369px;font-size:14.67px;transform:scaleX(0.9698);">Inandning</div>
<div class="t" style="left:184.40px;top:438px;font-size:14.67px;transform:scaleX(0.9800);">100</div>
<div class="t" style="left:198.90px;top:496px;font-size:14.67px;transform:scaleX(0.9800);">100</div>
<div class="t" style="left:267.60px;top:496px;font-size:14.67px;transform:scaleX(0.9800);">300</div>
<div class="t" style="left:292.70px;top:473px;font-size:14.67px;">Tryck [ Pa ]</div>
<div class="t" style="left:61.00px;top:611px;font-size:14.67px;transform:scaleX(0.9718);">Utandning</div>
<div class="t" style="left:175.30px;top:630px;font-size:14.67px;transform:scaleX(0.9786);">V0L = 6.1 [ grad ]</div>
<div class="t" style="left:175.30px;top:647px;font-size:14.67px;transform:scaleX(0.9866);">cL = 0.064 [ grad / radieenhet ]</div>
<div class="t" style="left:175.30px;top:664px;font-size:14.67px;transform:scaleX(0.9787);">V2L = 18.9 [ grad ]</div>
<div class="t" style="left:175.30px;top:681px;font-size:14.67px;transform:scaleX(1.0068);">R2L = 0.34 [ Pa/cm3/s ]</div>
<div class="t" style="left:440.30px;top:343px;font-size:14.67px;transform:scaleX(1.0083);">Flöde [ cm3/s ]</div>
<div class="t" style="left:375.00px;top:369px;font-size:14.67px;transform:scaleX(0.9907);">fCorr:  -222</div>
<div class="t" style="left:375.00px;top:386px;font-size:14.67px;transform:scaleX(0.9956);">pCorr:   12</div>
<div class="t" style="left:497.70px;top:369px;font-size:14.67px;transform:scaleX(0.9800);">300</div>
<div class="t" style="left:601.60px;top:369px;font-size:14.67px;transform:scaleX(0.9698);">Inandning</div>
<div class="t" style="left:498.40px;top:438px;font-size:14.67px;transform:scaleX(0.9800);">100</div>
<div class="t" style="left:512.90px;top:496px;font-size:14.67px;transform:scaleX(0.9800);">100</div>
<div class="t" style="left:581.60px;top:496px;font-size:14.67px;transform:scaleX(0.9800);">300</div>
<div class="t" style="left:606.70px;top:473px;font-size:14.67px;">Tryck [ Pa ]</div>
<div class="t" style="left:375.00px;top:611px;font-size:14.67px;transform:scaleX(0.9718);">Utandning</div>
<div class="t" style="left:489.30px;top:630px;font-size:14.67px;transform:scaleX(0.9784);">V0R = 7.9 [ grad ]</div>
<div class="t" style="left:489.30px;top:647px;font-size:14.67px;transform:scaleX(0.9898);">cR = 0.055 [ grad / radieenhet ]</div>
<div class="t" style="left:489.30px;top:664px;font-size:14.67px;transform:scaleX(0.9818);">V2R = 18.8 [ grad ]</div>
<div class="t" style="left:489.30px;top:681px;font-size:14.67px;transform:scaleX(1.0061);">R2R = 0.34 [ Pa/cm3/s ]</div>
<div class="t" style="left:52.30px;top:705px;font-size:14.67px;transform:scaleX(0.9600);">[ grader ] V2</div>
<div class="t" style="left:91.68px;top:721px;font-size:14.67px;transform:scaleX(0.9800);">90</div>
<div class="t" style="left:91.68px;top:746px;font-size:14.67px;transform:scaleX(0.9800);">60</div>
<div class="t" style="left:91.68px;top:771px;font-size:14.67px;transform:scaleX(0.9800);">40</div>
<div class="t" style="left:91.68px;top:788px;font-size:14.67px;transform:scaleX(0.9800);">30</div>
<div class="t" style="left:91.68px;top:813px;font-size:14.67px;transform:scaleX(0.9800);">20</div>
<div class="t" style="left:91.68px;top:855px;font-size:14.67px;transform:scaleX(0.9800);">10</div>
<div class="t" style="left:99.84px;top:885px;font-size:14.67px;transform:scaleX(0.9800);">6</div>
<div class="t" style="left:99.84px;top:910px;font-size:14.67px;transform:scaleX(0.9800);">4</div>
<div class="t" style="left:99.84px;top:927px;font-size:14.67px;transform:scaleX(0.9800);">3</div>
<div class="t" style="left:117.26px;top:941px;font-size:14.67px;transform:scaleX(0.9800);">150</div>
<div class="t" style="left:186.76px;top:941px;font-size:14.67px;transform:scaleX(0.9800);">160</div>
<div class="t" style="left:256.76px;top:941px;font-size:14.67px;transform:scaleX(0.9800);">170</div>
<div class="t" style="left:326.96px;top:941px;font-size:14.67px;transform:scaleX(0.9800);">180</div>
<div class="t" style="left:396.76px;top:941px;font-size:14.67px;transform:scaleX(0.9800);">190</div>
<div class="t" style="left:465.56px;top:941px;font-size:14.67px;transform:scaleX(0.9800);">200</div>
<div class="t" style="left:493.40px;top:918px;font-size:14.67px;transform:scaleX(0.9683);">Längd</div>
<div class="t" style="left:494.70px;top:939px;font-size:14.67px;transform:scaleX(1.0179);">[ cm ]</div>
<div class="t" style="left:128.90px;top:769px;font-size:14.67px;transform:scaleX(0.9903);">förhöjda</div>
<div class="t" style="left:128.90px;top:798px;font-size:14.67px;">normala</div>
<div class="t" style="left:378.20px;top:818px;font-size:14.67px;transform:scaleX(0.9800);color:#4a4ac0;">L</div>
<div class="t" style="left:406.20px;top:818px;font-size:14.67px;transform:scaleX(0.9800);color:#c03848;">R</div>

  </div>
</div>
</body>
</html>
